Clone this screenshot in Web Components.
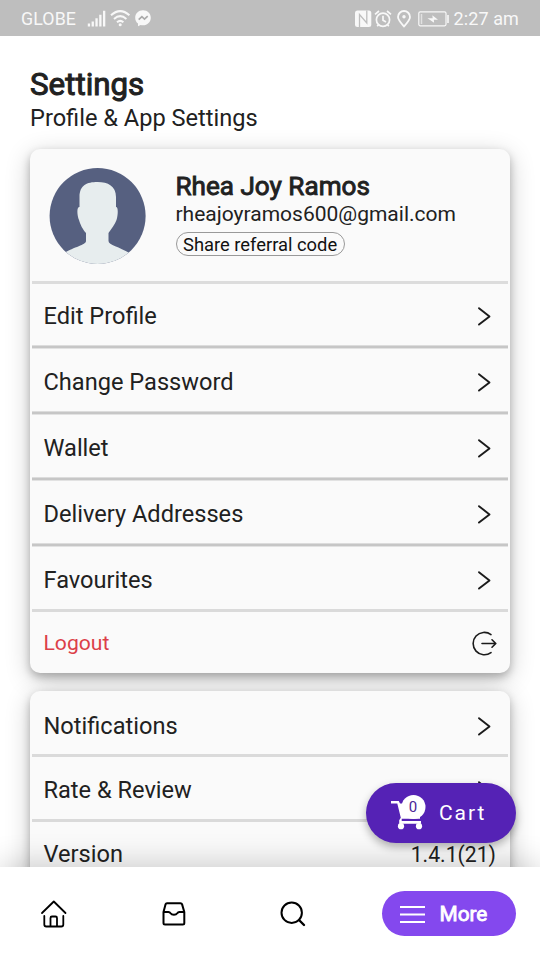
<!DOCTYPE html>
<html lang="en">
<head>
<meta charset="utf-8">
<title>Settings</title>
<style>
  html,body{margin:0;height:100%;overflow:hidden}
  body{font-family:Roboto,"Liberation Sans",sans-serif;color:#212121;background:#fff}
</style>
</head>
<body>
<settings-app>
  <status-bar slot="status" carrier="GLOBE" time="2:27 am"></status-bar>
  <page-title heading="Settings">Profile &amp; App Settings</page-title>
  <settings-card>
    <profile-head name="Rhea Joy Ramos" email="rheajoyramos600@gmail.com">Share referral code</profile-head>
    <settings-row double style="--h:61px;--shift:3px">Edit Profile</settings-row>
    <settings-row double style="--h:62px;--shift:4px">Change Password</settings-row>
    <settings-row double style="--h:62px;--shift:4px">Wallet</settings-row>
    <settings-row double style="--h:62px;--shift:4px">Delivery Addresses</settings-row>
    <settings-row style="--h:62px;--shift:4px">Favourites</settings-row>
    <settings-row icon="logout" style="--h:61px;--line:0px;--color:#dc4048;--size:21.1px;--shift:0px">Logout</settings-row>
  </settings-card>
  <settings-card>
    <settings-row style="--h:63px;--shift:6px">Notifications</settings-row>
    <settings-row style="--h:62px;--shift:4px">Rate &amp; Review</settings-row>
    <settings-row value="1.4.1(21)" style="--h:62px;--shift:2px">Version</settings-row>
  </settings-card>
  <cart-button slot="fab" count="0">Cart</cart-button>
  <nav-bar slot="nav">More</nav-bar>
</settings-app>

<script>
  const define = (tag, html, setup) => {
    const tpl = document.createElement("template");
    tpl.innerHTML = html;
    customElements.define(tag, class extends HTMLElement {
      constructor(){
        super();
        this.attachShadow({mode:"open"}).appendChild(tpl.content.cloneNode(true));
      }
      connectedCallback(){ if (setup) setup(this, this.shadowRoot); }
    });
  };
  const text = (root, id, v) => { root.getElementById(id).textContent = v; };

  define("settings-app", `
    <style>
      :host{display:grid;grid-template-columns:minmax(0,1fr);grid-template-rows:36px 1fr 93px;height:960px;width:540px;position:relative;overflow:hidden}
      main{overflow:hidden;padding:0 30px;min-height:0}
      ::slotted([slot=fab]){position:absolute;right:24px;bottom:117px;z-index:1}
      ::slotted([slot=nav]){z-index:0}
    </style>
    <slot name="status"></slot>
    <main><slot></slot></main>
    <slot name="nav"></slot>
    <slot name="fab"></slot>`);

  define("status-bar", `
    <style>
      :host{display:flex;align-items:center;background:#bebebe;color:#f8f8f8;padding:1px 21px 0;font-size:18px;box-sizing:border-box}
      svg{display:block;flex:none;fill:none;stroke:#f8f8f8}
      .solid{fill:#f8f8f8;stroke:none}
      #carrier{width:66px;font-size:17.800px;letter-spacing:.1px}
      #time{letter-spacing:.1px;margin-left:4px;white-space:nowrap}
      .gap{flex:1}
    </style>
    <span id="carrier"></span>
    <svg width="19" height="18" viewBox="0 0 19 18" class="solid"><path d="M.8 13.500h2.300v3H.8zM4.600 11.500h2.300v5H4.600zM8.400 8.300h2.300v8.200H8.400zM12.200 4.800h2.300v11.700h-2.300zM16 .8h2.300v15.700H16z"/></svg>
    <svg width="21" height="18" viewBox="0 0 21 18" stroke-width="2" style="margin:0 4px 0 4px"><path d="M1 5.300Q10.200-3 19.400 5.300M4 8.900Q10.200 3.400 16.400 8.900M7 12.200Q10.200 9.500 13.400 12.200"/><circle cx="10.200" cy="14.800" r="1.500" class="solid"/></svg>
    <svg width="17" height="17" viewBox="0 0 17 17"><path class="solid" d="M8 .3C3.500.3.2 3.600.2 7.700c0 2.500 1 4.400 2.800 5.800V16.200l2.600-1.200c.8.2 1.600.3 2.400.3 4.500 0 7.800-3.400 7.800-7.600S12.500.3 8 .3z"/><path d="M3.700 9.700l3.200-3 2.600 2.400L12.700 6.200" stroke="#aaa" stroke-width="1.700"/></svg>
    <span class="gap"></span>
    <svg width="18" height="18" viewBox="0 0 18 18" style="margin:0 -1.500px 0 0"><rect x="0" y=".5" width="16.300" height="16.400" rx="2.500" class="solid"/><path d="M4.500 17V4.500l7.300 8.500V.5" stroke="#bebebe" stroke-width="1.300"/></svg>
    <svg width="18" height="18" viewBox="0 0 18 18" stroke-width="1.700" style="margin:0 3px 0 2.500px"><circle cx="9" cy="9.800" r="6.600"/><path d="M1 4.300L5 1M17 4.300L13 1M9 5.800v4.500l3 1.800M4.500 14.800l-1.300 1.500M13.500 14.800l1.300 1.500"/></svg>
    <svg width="14" height="18" viewBox="0 0 14 18" stroke-width="1.800" style="margin-left:2px"><path d="M7 16.500C3.500 12.500 1 9.800 1 7a6 6 0 0112 0c0 2.800-2.500 5.500-6 9.500z"/><circle cx="7" cy="6.800" r="1.700" class="solid"/></svg>
    <svg width="32" height="18" viewBox="0 0 32 18" style="margin-left:7px"><rect x=".8" y="1.800" width="27.200" height="14" rx="1.500" stroke-width="1.200"/><path d="M3.500 4v10" stroke-width="1.500" opacity=".6"/><path class="solid" d="M29.200 5h1.600v8h-1.600zM9.500 8.200l5.200 0-.4-3 5.700 4.500h-4.200l.3 3z"/></svg>
    <span id="time"></span>`, (el, root) => {
      text(root, "carrier", el.getAttribute("carrier"));
      text(root, "time", el.getAttribute("time"));
    });

  define("page-title", `
    <style>
      :host{display:block;height:113px;box-sizing:border-box;padding-top:30px;white-space:nowrap}
      h1{font-size:31.300px;line-height:37px;font-weight:400;margin:0;-webkit-text-stroke:1px #212121}
      p{margin:0;font-size:23.600px;line-height:30px}
    </style>
    <h1 id="heading"></h1><p><slot></slot></p>`, (el, root) => {
      text(root, "heading", el.getAttribute("heading"));
    });

  define("settings-card", `
    <style>
      :host{display:block;background:#fafafa;border-radius:10px;padding:0 2px;margin-bottom:18px;
            box-shadow:0 4px 9px rgba(0,0,0,.25),0 6px 26px rgba(0,0,0,.2)}
    </style>
    <slot></slot>`);

  define("profile-head", `
    <style>
      :host{display:flex;height:132px;border-bottom:3px solid #dcdcdc;padding-left:16.500px;white-space:nowrap}
      svg{margin:18px 29px 0 0;width:98px;height:98px;flex:none}
      .info{padding-top:21px}
      h2{font-size:26.100px;line-height:32px;font-weight:400;margin:0;-webkit-text-stroke:.9px #212121}
      p{font-size:21px;line-height:25px;margin:0 0 5px}
      button{display:block;font:18.350px/21px Roboto,"Liberation Sans",sans-serif;color:#111;height:24px;padding:0 6.500px;
             border:1.500px solid #999;border-radius:12px;background:#fafafa}
    </style>
    <svg viewBox="0 0 98 98">
      <defs><clipPath id="c"><circle cx="48.600" cy="49" r="48"/></clipPath></defs>
      <g clip-path="url(#c)">
        <path fill="#566080" d="M0 0h98v98H0z"/>
        <path fill="#e7edee" d="M30.500 30C30.500 18 38 15 48.500 15s18.500 4 18.500 15v10c2.500 0 2 8 .5 13-1.500 4-5 9-8 13v8c0 4 11 6 21 12v12H15V86c10-6 22-8 22-12v-8c-3-3-6-9-7-13-2-5-2.500-13 .5-13z"/>
      </g>
    </svg>
    <div class="info"><h2 id="name"></h2><p id="email"></p><button><slot></slot></button></div>`, (el, root) => {
      text(root, "name", el.getAttribute("name"));
      text(root, "email", el.getAttribute("email"));
    });

  const icons = {
    chevron: `<svg width="14" height="20" viewBox="0 0 14 20" style="margin-right:17px"><path d="M2 2.200L12.500 10.400L2 18.600" stroke-width="1.900"/></svg>`,
    logout: `<svg width="27" height="27" viewBox="0 0 27 27" style="margin:2px 10px 0 0"><path d="M20 4.600A11.200 11.200 0 1 0 20 22.600M11 13.500H24.500M21 9.800L24.800 13.500L21 17.200" stroke-width="1.600"/></svg>`
  };

  define("settings-row", `
    <style>
      :host{display:flex;align-items:center;justify-content:space-between;height:var(--h);padding-left:11.500px;
            border-bottom:var(--line,3px) solid #dadada;white-space:nowrap;
            color:var(--color,#212121);font-size:var(--size,23.600px)}
      /* bottom border of one row next to the top border of the following one */
      :host([double]){border-bottom-width:1px;border-bottom-color:#e2e2e2;box-shadow:inset 0 -1px #c6c6c6,inset 0 -2px #c6c6c6,inset 0 -3px #dcdcdc;padding-bottom:3px}
      .label{padding-top:var(--shift,2px)}
      #end{display:flex;align-items:center;padding-top:var(--shift,2px)}
      svg{fill:none;stroke:#1b1b1b;stroke-linecap:round;stroke-linejoin:round}
      .value{font-size:21.200px;margin-right:12px}
    </style>
    <span class="label"><slot></slot></span><span id="end"></span>`, (el, root) => {
      const end = root.getElementById("end");
      if (el.hasAttribute("value")){
        end.textContent = el.getAttribute("value");
        end.className = "value";
      } else end.innerHTML = icons[el.getAttribute("icon") || "chevron"];
    });

  define("cart-button", `
    <style>
      :host{display:flex;align-items:center;width:150px;height:60px;box-sizing:border-box;border-radius:30px;padding-left:24px;
            background:#5522b5;color:#fff;font-size:21px;letter-spacing:1.900px;box-shadow:0 4px 9px rgba(0,0,0,.3)}
      .icon{position:relative;width:36px;height:36px;margin-right:13px}
      svg{display:block}
      #count{position:absolute;left:14px;top:3px;width:18px;text-align:center;color:#4a2597;font-size:15px;line-height:18px;letter-spacing:0}
    </style>
    <span class="icon">
      <svg width="36" height="36" viewBox="0 0 36 36" fill="#fff"><circle cx="23.500" cy="12" r="12"/><path d="M1 6h7.800l1.200 2.500h20V23.800H11.700V26h19.300v2.700H9.200V25.200l1.600-2.400L7.300 8.600H1z"/><circle cx="11" cy="31.200" r="3.100"/><circle cx="29" cy="31.200" r="3.100"/></svg>
      <span id="count"></span>
    </span>
    <slot></slot>`, (el, root) => {
      text(root, "count", el.getAttribute("count"));
    });

  define("nav-bar", `
    <style>
      :host{display:flex;align-items:center;background:#fff;position:relative;padding:0 24px 0 40px;box-sizing:border-box;
            box-shadow:0 -2px 30px rgba(0,0,0,.2)}
      svg{display:block;fill:none;stroke:#000;stroke-width:2;stroke-linecap:round;stroke-linejoin:round}
      .item{width:119.500px;flex:none;padding-top:1px}
      .more{margin-left:-16.500px;flex:none;width:134px;height:45px;border-radius:23px;background:#8448ee;color:#fff;display:flex;align-items:center;
            box-sizing:border-box;padding:0 0 0 18px;gap:14.500px;font-size:20.800px;-webkit-text-stroke:.8px #fff}
      .more svg{stroke:#fff;stroke-linecap:butt;stroke-width:2.200;margin-top:2px}
    </style>
    <span class="item"><svg width="28" height="30" viewBox="0 0 28 30"><path d="M2 14L13.800 2.500L25.500 14M4.300 17v8.500q0 2 2 2h15q2 0 2-2V17M10.500 27v-8q0-1.500 1.500-1.500h3.500q1.500 0 1.500 1.500v8" stroke-width="1.800"/></svg></span>
    <span class="item"><svg width="28" height="28" viewBox="0 0 28 28"><path d="M7 3.200h13.500q1.200 0 1.600 1.200L24.300 12v11q0 1.500-1.500 1.500H5q-1.500 0-1.500-1.500V12L5.500 4.400Q5.900 3.200 7 3.200zM3.500 12h5q1.300 0 1.800 1 1.300 1.800 3.600 1.800t3.600-1.800q.5-1 1.800-1h5"/></svg></span>
    <span class="item"><svg width="28" height="28" viewBox="0 0 28 28"><circle cx="12.700" cy="12.700" r="10.200"/><path d="M20 20l5 5" stroke-width="2.400"/></svg></span>
    <span class="more"><svg width="25" height="20" viewBox="0 0 25 20"><path d="M0 2h25M0 9.500h25M0 17h25"/></svg><slot></slot></span>`);
</script>
</body>
</html>
